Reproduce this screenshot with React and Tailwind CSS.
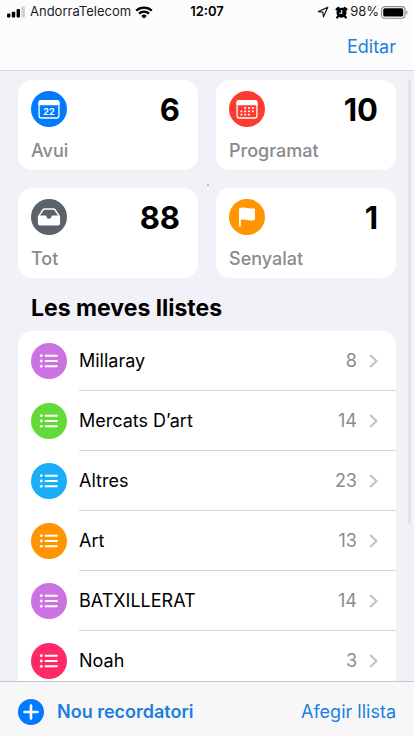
import React from "react";

const lists = [
  { name: "Millaray", count: 8, color: "bg-[#cb73e1]" },
  { name: "Mercats D’art", count: 14, color: "bg-[#63da38]" },
  { name: "Altres", count: 23, color: "bg-[#1badf8]" },
  { name: "Art", count: 13, color: "bg-[#ff9500]" },
  { name: "BATXILLERAT", count: 14, color: "bg-[#cb73e1]" },
  { name: "Noah", count: 3, color: "bg-[#ff2968]" },
];

const TodayIcon = () => (
  <svg viewBox="0 0 36 36" className="h-full w-full" aria-hidden="true">
    <rect x="8.1" y="9.6" width="19.8" height="17.4" rx="2.2" fill="none" stroke="#fff" strokeWidth="1.3" />
    <path d="M7.5 14.2v-2.7a2.6 2.6 0 0 1 2.6-2.6h15.8a2.6 2.6 0 0 1 2.6 2.6v2.7z" fill="#fff" />
    <text x="18" y="23.6" textAnchor="middle" fontSize="9" fontWeight="700" fill="#fff">
      22
    </text>
  </svg>
);

const dots = [
  [16.2, 17], [20, 17], [23.8, 17],
  [12.4, 20.3], [16.2, 20.3], [20, 20.3], [23.8, 20.3],
  [12.4, 23.6], [16.2, 23.6], [20, 23.6],
];

const ScheduledIcon = () => (
  <svg viewBox="0 0 36 36" className="h-full w-full" aria-hidden="true">
    <rect x="8.1" y="9.6" width="19.8" height="17.4" rx="2.2" fill="none" stroke="#fff" strokeWidth="1.3" />
    <path d="M7.5 14.2v-2.7a2.6 2.6 0 0 1 2.6-2.6h15.8a2.6 2.6 0 0 1 2.6 2.6v2.7z" fill="#fff" />
    {dots.map(([x, y]) => (
      <rect key={`${x}-${y}`} x={x - 0.9} y={y - 0.9} width="1.8" height="1.8" rx="0.4" fill="#fff" />
    ))}
  </svg>
);

const TrayIcon = () => (
  <svg viewBox="0 0 36 36" className="h-full w-full" aria-hidden="true">
    <path
      d="M6.900 17.300 11.300 10.600a2.900 2.900 0 0 1 2.400-1.300h8.600a2.900 2.900 0 0 1 2.400 1.300l4.400 6.700v6.600a2.500 2.500 0 0 1-2.500 2.500H9.400a2.500 2.500 0 0 1-2.500-2.500z"
      fill="#fff"
    />
    <path
      d="M9 16.400 12.500 11.400a1.600 1.600 0 0 1 1.300-.7h8.400a1.600 1.600 0 0 1 1.300.7l3.500 5h-5.500c-.6 0-.9.4-1 .9a2.500 2.500 0 0 1-5 0c-.1-.5-.4-.9-1-.9z"
      fill="#5b626a"
    />
  </svg>
);

const FlagIcon = () => (
  <svg viewBox="0 0 36 36" className="h-full w-full" aria-hidden="true">
    <path
      d="M10 10.400c0-.8.4-1.200 1.200-1.400 1-.3 2-.4 3-.4 3 0 4.600 1 7.200 1 1.200 0 2.300-.2 3.300-.4.7-.1 1.200.2 1.200.9v9.800c0 .7-.4 1.100-1.100 1.300-1.100.3-2.200.4-3.300.4-2.900 0-4.500-1-7.200-1-.9 0-1.700.1-2.500.3v6a.9.9 0 0 1-1.800 0z"
      fill="#fff"
    />
  </svg>
);

const ListIcon = () => (
  <svg viewBox="0 0 36 36" className="h-full w-full" aria-hidden="true">
    <g fill="#fff">
      {[12.7, 18, 23.3].map((y) => (
        <React.Fragment key={y}>
          <circle cx="10.3" cy={y} r="1.4" />
          <rect x="13.6" y={y - 1} width="13.2" height="2" rx="1" />
        </React.Fragment>
      ))}
    </g>
  </svg>
);

const cards = [
  { label: "Avui", count: 6, color: "bg-[#007aff]", Icon: TodayIcon },
  { label: "Programat", count: 10, color: "bg-[#ff3b30]", Icon: ScheduledIcon },
  { label: "Tot", count: 88, color: "bg-[#5b626a]", Icon: TrayIcon },
  { label: "Senyalat", count: 1, color: "bg-[#ff9500]", Icon: FlagIcon },
];

function StatusBar() {
  return (
    <div className="grid h-6 grid-cols-[1fr_auto_1fr] items-center px-1.5 text-[13px] text-[#1c1c1e]">
      <div className="flex items-center gap-1">
        <svg width="20" height="12" viewBox="0 0 20 12" aria-hidden="true">
          <rect x="1" y="7.5" width="3.4" height="4" rx="0.9" fill="#000" />
          <rect x="5.8" y="5.7" width="3.4" height="5.8" rx="0.9" fill="#000" />
          <rect x="10.6" y="3.1" width="3.4" height="8.4" rx="0.9" fill="#000" />
          <rect x="15.5" y="0.5" width="3.4" height="11" rx="0.9" fill="#cfcfd1" />
        </svg>
        <span>AndorraTelecom</span>
        <svg width="18" height="13" viewBox="0 0 18 13" fill="none" stroke="#000" strokeWidth="2.3" aria-hidden="true">
          <path d="M1.2 4.7a11.2 11.2 0 0 1 15.6 0" />
          <path d="M4 7.7a7.2 7.2 0 0 1 10 0" />
          <path d="M9 12.6 6.300 9.900a3.800 3.800 0 0 1 5.400 0z" fill="#000" stroke="none" />
        </svg>
      </div>
      <span className="font-semibold text-black">12:07</span>
      <div className="flex items-center justify-end gap-0.5">
        <svg width="12" height="12" viewBox="0 0 12 12" fill="none" stroke="#1c1c1e" strokeWidth="1.2" strokeLinejoin="round" aria-hidden="true">
          <path d="M10.8 1.2 1.3 5.6l4.5.6.7 4.6z" />
        </svg>
        <svg width="13" height="13" viewBox="0 0 13 13" className="ml-1" aria-hidden="true">
          <circle cx="6.5" cy="6.8" r="5" fill="#000" />
          <path d="M1.6 3.4 3.4 1.8M11.4 3.4 9.600 1.800M2.900 10.600 2.200 11.500M10.100 10.600 10.800 11.500" stroke="#000" strokeWidth="2.2" strokeLinecap="round" />
          <path d="M6.7 4v3.2H4.3" fill="none" stroke="#fff" strokeWidth="1.1" />
        </svg>
        <span>98%</span>
        <svg width="27" height="13" viewBox="0 0 27 13" aria-hidden="true">
          <rect x="0.6" y="0.6" width="23.4" height="11.6" rx="3.2" fill="none" stroke="#8b8b8d" strokeWidth="1.1" />
          <rect x="2.2" y="2.2" width="20" height="8.4" rx="1.7" fill="#000" />
          <path d="M25.2 4.4c1.7.6 1.7 3.4 0 4z" fill="#8b8b8d" />
        </svg>
      </div>
    </div>
  );
}

function SummaryCard({ label, count, color, Icon }) {
  return (
    <button type="button" className="flex h-[90px] flex-col justify-between rounded-[14px] bg-white px-[13px] pt-[11px] pb-[7px] text-left">
      <span className="flex w-full items-start justify-between">
        <span className={`size-9 rounded-full ${color}`}>
          <Icon />
        </span>
        <span className="pr-[5px] text-[31px] leading-[38px] font-bold text-black">{count}</span>
      </span>
      <span className="text-lg leading-6 font-medium text-[#8a8a8e]">{label}</span>
    </button>
  );
}

function ListRow({ name, count, color }) {
  return (
    <li className="group">
      <a href="#" className="flex h-[60px] items-center pl-[13px]">
        <span className={`size-9 shrink-0 rounded-full ${color}`}>
          <ListIcon />
        </span>
        <span className="ml-3 flex h-full flex-1 items-center border-b border-[#d6d6d9] pr-[18px] group-last:border-transparent">
          <span className="flex-1 text-lg text-black">{name}</span>
          <span className="text-lg text-[#8a8a8e]">{count}</span>
          <svg width="9" height="14" viewBox="0 0 9 14" className="ml-3" fill="none" stroke="#c4c4c7" strokeWidth="2.2" aria-hidden="true">
            <path d="M1.2 1 7.4 7l-6.2 6" />
          </svg>
        </span>
      </a>
    </li>
  );
}

export default function App() {
  return (
    <div className="flex h-screen flex-col bg-[#f2f1f7] font-[Inter,'Liberation_Sans',sans-serif]">
      <header className="border-b border-[#d4d4d8] bg-[#fcfcfd]">
        <StatusBar />
        <div className="flex h-[46px] items-center justify-end px-[18px]">
          <button type="button" className="text-lg text-[#1a7fe0]">
            Editar
          </button>
        </div>
      </header>

      <div className="relative min-h-0 flex-1">
        <main className="h-full overflow-y-auto px-[18px] pt-[9px] [scrollbar-width:none]">
          <div className="relative grid grid-cols-2 gap-[18px]">
            {cards.map((card) => (
              <SummaryCard key={card.label} {...card} />
            ))}
            <span className="absolute top-[104px] left-1/2 size-0.5 rounded-full bg-[#a9a9ae]" />
          </div>
          <h1 className="px-[13px] pt-[14px] pb-[7px] text-[23px] leading-8 font-bold text-black">Les meves llistes</h1>
          <ul className="rounded-[14px] bg-white">
            {lists.map((list) => (
              <ListRow key={list.name} {...list} />
            ))}
          </ul>
        </main>
        {/* Scroll indicator */}
        <div className="absolute top-2 right-[3px] h-[73%] w-[3px] rounded-full bg-[#e3e2e8]" />
      </div>

      <footer className="flex h-[55px] items-center justify-between border-t border-[#c6c6ca] bg-[#f7f7f8] px-[18px] pt-1.5 text-lg">
        <button type="button" className="flex items-center gap-[13px] font-semibold text-[#1a7fe0]">
          <svg width="26" height="26" viewBox="0 0 26 26" aria-hidden="true">
            <circle cx="13" cy="13" r="13" fill="#007aff" />
            <path d="M13 6.5v13M6.5 13h13" stroke="#fff" strokeWidth="2.6" strokeLinecap="round" />
          </svg>
          Nou recordatori
        </button>
        <button type="button" className="text-[#1a7fe0]">
          Afegir llista
        </button>
      </footer>
    </div>
  );
}
